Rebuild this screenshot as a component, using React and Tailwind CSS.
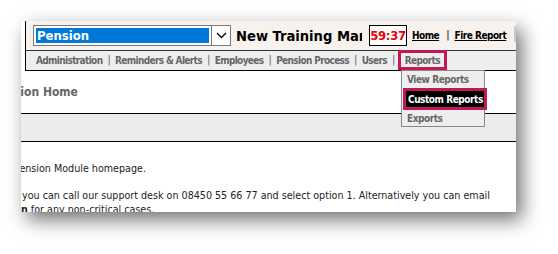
import { useState } from 'react'

const FONT = "font-['DejaVu_Sans_Condensed','DejaVu_Sans',sans-serif]"

const NAV = ['Administration', 'Reminders & Alerts', 'Employees', 'Pension Process', 'Users']

export default function App() {
  const [open] = useState(true)

  return (
    <div className={`w-[558px] h-[254px] bg-white pl-[21px] pt-[21px] ${FONT}`}>
      <div className="relative w-[495px] h-[191px] bg-white overflow-hidden shadow-[6px_8px_18px_rgba(0,0,0,0.55)]">

        {/* Header + nav */}
        <div className="ml-[4px] border-l border-black">
          <div className="h-[30px] bg-[#f8f2ee] border-b border-[#333] flex items-center pl-[7px] whitespace-nowrap">
            <div className="shrink-0 flex h-[21px] w-[198px] border border-[#7a7a7a] bg-white">
              <div className="flex-1 m-[2px] bg-[#0078d7] text-white font-bold text-[13px] leading-[16px] pl-[1px]">
                Pension
              </div>
              <div className="w-[19px] border-l border-[#7a7a7a] flex items-center justify-center">
                <svg width="11" height="7" viewBox="0 0 11 7">
                  <path d="M1 1 L5.5 5.5 L10 1" fill="none" stroke="#000" strokeWidth="1.3" />
                </svg>
              </div>
            </div>
            <div className="shrink-0 ml-[5px] w-[126px] overflow-hidden font-bold text-[14.6px] text-black">
              New Training Manager
            </div>
            <div className="shrink-0 ml-[7px] h-[21px] w-[38px] border border-black bg-white flex items-center justify-center text-[#ee0000] font-bold text-[13px] tracking-[-0.3px]">
              59:37
            </div>
            <a className="shrink-0 ml-[5px] text-[10px] tracking-[-0.5px] font-bold text-black underline">Home</a>
            <span className="shrink-0 ml-[7px] text-[11px] text-black">|</span>
            <a className="shrink-0 ml-[5px] text-[10px] tracking-[-0.5px] font-bold text-black underline">Fire Report</a>
            <div className="ml-auto shrink-0 w-[2px] h-[16px] bg-[#c8c8c8] self-start mt-[5px]" />
          </div>
          <div className="h-[20px] bg-[#eeeeee] border-b border-black flex items-center pl-[10px] text-[10px] tracking-[-0.65px] font-bold text-[#666] whitespace-nowrap">
            {NAV.map(n => (
              <span key={n} className="shrink-0 flex items-center">
                {n}
                <span className="mx-[5px] font-normal text-[11px]">|</span>
              </span>
            ))}
            <span className="shrink-0 h-[20px] -mt-[1px] -ml-[2px] flex items-center px-[4px] border-[3px] border-[#c2185b]">Reports</span>
          </div>
        </div>

        {/* Page title */}
        <div className="h-[42px] flex items-center whitespace-nowrap">
          <span className="-ml-[30px] text-[12px] font-bold text-[#666]">Pension Home</span>
        </div>
        <div className="h-[29px] bg-[#ececec] border-y border-black" />

        {/* Body */}
        <div className="pt-[20px] text-[10.65px] text-[#222] whitespace-nowrap leading-[14px]">
          <div className="-ml-[7px]">Pension Module homepage.</div>
          <div className="mt-[13px] ml-[1px]">you can call our support desk on 08450 55 66 77 and select option 1. Alternatively you can email</div>
          <div><b>n</b> for any non-critical cases.</div>
        </div>

        {/* Reports dropdown */}
        {open && (
          <div className="absolute left-[380px] top-[49px] w-[84px] h-[57px] bg-[#eeeeee] border border-[#888] text-[10px] tracking-[-0.45px] font-bold whitespace-nowrap">
            <div className="h-[17px] flex items-center pl-[5px] text-[#666]">View Reports</div>
            <div className="h-[22px] ml-[1px] w-[84px] border-[3px] border-[#c2185b] bg-black text-white flex items-center pl-[2px]">Custom Reports</div>
            <div className="h-[16px] flex items-center pl-[5px] text-[#666]">Exports</div>
          </div>
        )}
      </div>
    </div>
  )
}
